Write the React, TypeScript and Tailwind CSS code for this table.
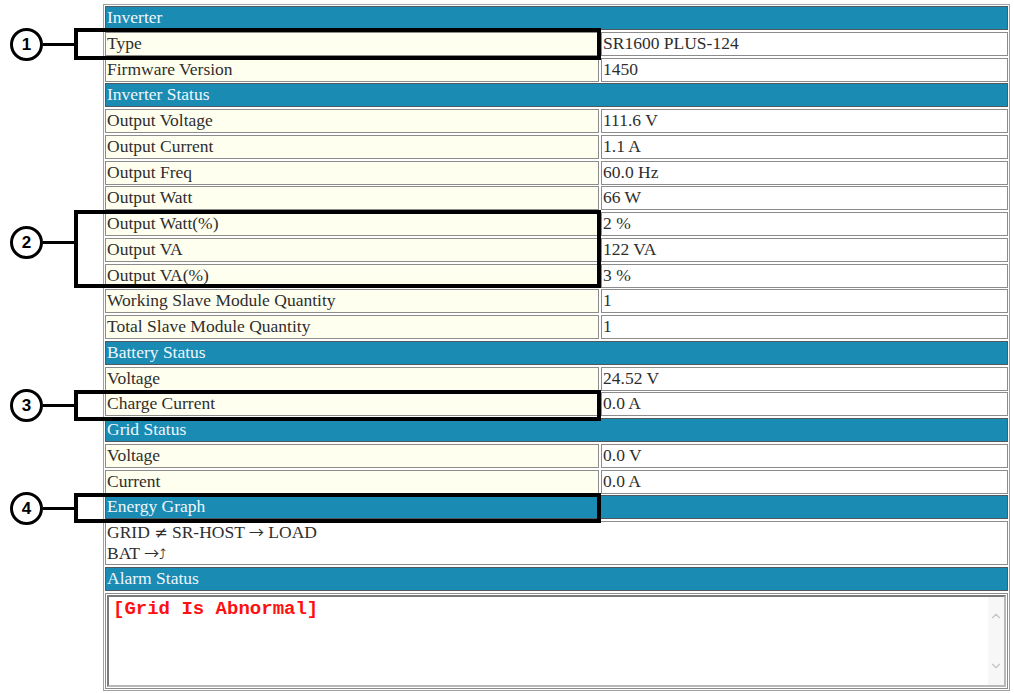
import { ChevronUp, ChevronDown } from "lucide-react"

type Row =
  | { kind: "header"; title: string }
  | { kind: "item"; label: string; value: string }

const rows: Row[] = [
  { kind: "header", title: "Inverter" },
  { kind: "item", label: "Type", value: "SR1600 PLUS-124" },
  { kind: "item", label: "Firmware Version", value: "1450" },
  { kind: "header", title: "Inverter Status" },
  { kind: "item", label: "Output Voltage", value: "111.6 V" },
  { kind: "item", label: "Output Current", value: "1.1 A" },
  { kind: "item", label: "Output Freq", value: "60.0 Hz" },
  { kind: "item", label: "Output Watt", value: "66 W" },
  { kind: "item", label: "Output Watt(%)", value: "2 %" },
  { kind: "item", label: "Output VA", value: "122 VA" },
  { kind: "item", label: "Output VA(%)", value: "3 %" },
  { kind: "item", label: "Working Slave Module Quantity", value: "1" },
  { kind: "item", label: "Total Slave Module Quantity", value: "1" },
  { kind: "header", title: "Battery Status" },
  { kind: "item", label: "Voltage", value: "24.52 V" },
  { kind: "item", label: "Charge Current", value: "0.0 A" },
  { kind: "header", title: "Grid Status" },
  { kind: "item", label: "Voltage", value: "0.0 V" },
  { kind: "item", label: "Current", value: "0.0 A" },
  { kind: "header", title: "Energy Graph" },
]

// callout markers drawn over the table
const callouts = [
  { n: "1", cy: 44, top: 28, height: 32 },
  { n: "2", cy: 242, top: 210, height: 78 },
  { n: "3", cy: 405, top: 390, height: 31 },
  { n: "4", cy: 508, top: 493, height: 30 },
]

function HeaderRow({ title }: { title: string }) {
  return (
    <div className="flex h-[23.75px] items-center border border-[#4f5a60] bg-[#1a8bb2] px-[1px] pb-[2px] text-[#eef7ff]">
      {title}
    </div>
  )
}

function ItemRow({ label, value }: { label: string; value: string }) {
  return (
    <div className="grid h-[23.75px] grid-cols-[494px_407px] gap-x-[2px]">
      <div className="flex items-center border border-[#8c8c8c] bg-[#fffff0] px-[1px] pb-[2px]">
        {label}
      </div>
      <div className="flex items-center border border-[#8c8c8c] bg-white px-[1px] pb-[2px]">
        {value}
      </div>
    </div>
  )
}

export default function App() {
  return (
    <div className="relative h-[693px] w-[1014px] overflow-hidden bg-white font-['Liberation_Serif',serif] text-[17.5px] leading-[20px] text-[#2e2e2e]">
      <div className="pl-[103px] pt-[4px]">
        <div className="flex w-[907px] flex-col gap-[2px] border border-[#a0a0a0] p-[1px]">
          {rows.map((r, i) =>
            r.kind === "header" ? (
              <HeaderRow key={i} title={r.title} />
            ) : (
              <ItemRow key={i} label={r.label} value={r.value} />
            )
          )}
          <div className="h-[44px] border border-[#8c8c8c] bg-white px-[1px] leading-[20px]">
            <div>
              GRID <span className="font-['DejaVu_Serif',serif] text-[16px]">≠</span> SR-HOST{" "}
              <span className="font-['Noto_Sans_CJK_TC',sans-serif] text-[15px]">→</span> LOAD
            </div>
            <div>
              BAT <span className="font-['Noto_Sans_CJK_TC',sans-serif] text-[15px]">→</span>
              <span className="font-['DejaVu_Sans',sans-serif] text-[14px]">⤴</span>
            </div>
          </div>
          <HeaderRow title="Alarm Status" />
          <div className="h-[96px] border border-[#8c8c8c] bg-white p-[1px]">
            <div className="flex h-full border-2 border-t-[#7a7a7a] border-l-[#7a7a7a] border-b-[#b8b8b8] border-r-[#b8b8b8] bg-white">
              <div className="flex-1 pl-[4px] pt-[1px] font-['Liberation_Mono',monospace] text-[19px] font-bold leading-[22px] text-[#ff1010]">
                [Grid Is Abnormal]
              </div>
              <div className="flex w-[16px] flex-col items-center justify-between bg-[#f7f7f7] py-[12px]">
                <ChevronUp className="size-[14px] text-[#c4c4c4]" strokeWidth={2} />
                <ChevronDown className="size-[14px] text-[#c4c4c4]" strokeWidth={2} />
              </div>
            </div>
          </div>
        </div>
      </div>

      {callouts.map((c) => (
        <div key={c.n}>
          <div
            className="absolute left-[10px] flex size-[33px] items-center justify-center rounded-full border-[3px] border-black bg-white font-['Liberation_Sans',sans-serif] text-[17px] font-bold text-black"
            style={{ top: c.cy - 16 }}
          >
            {c.n}
          </div>
          <div
            className="absolute left-[43px] h-[3px] w-[33px] bg-black"
            style={{ top: c.cy - 1 }}
          />
          <div
            className="absolute left-[74px] w-[527px] border-4 border-black"
            style={{ top: c.top, height: c.height }}
          />
        </div>
      ))}
    </div>
  )
}
